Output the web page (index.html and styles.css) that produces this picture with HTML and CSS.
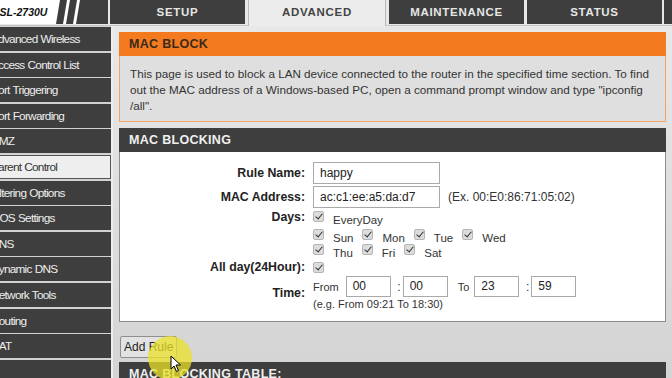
FILE: index.html
```html
<!DOCTYPE html>
<html lang="en">
<head>
    <meta charset="UTF-8">
    <meta name="viewport" content="width=device-width, initial-scale=1.0">
    <title>DSL-2730U - Parent Control</title>
    <link rel="stylesheet" href="styles.css">
</head>
<body>
<div class="page">
    <header class="topbar">
        <div class="logo">
            <span class="logo-text">DSL-2730U</span>
            <svg class="logo-slash" width="52" height="24" viewBox="0 0 52 24">
                <rect x="0" y="0" width="52" height="24" fill="#ffffff"/>
                <polygon points="4,0 11,0 7,24 0,24" fill="#3e3e3e"/>
                <polygon points="14,0 21,0 17,24 10,24" fill="#3e3e3e"/>
                <polygon points="24,0 52,0 52,24 20,24" fill="#3e3e3e"/>
            </svg>
        </div>
        <nav class="tabs">
            <a class="tab">SETUP</a>
            <a class="tab active">ADVANCED</a>
            <a class="tab">MAINTENANCE</a>
            <a class="tab">STATUS</a>
            <a class="tab stub"></a>
        </nav>
    </header>

    <div class="main">
        <aside class="sidebar">
            <ul>
                <li>Advanced Wireless</li>
                <li>Access Control List</li>
                <li>Port Triggering</li>
                <li>Port Forwarding</li>
                <li>DMZ</li>
                <li class="selected">Parent Control</li>
                <li>Filtering Options</li>
                <li>QOS Settings</li>
                <li>DNS</li>
                <li>Dynamic DNS</li>
                <li>Network Tools</li>
                <li>Routing</li>
                <li>NAT</li>
                <li></li>
            </ul>
        </aside>

        <section class="content">
            <div class="box info">
                <h2 class="box-head orange">MAC BLOCK</h2>
                <p class="info-text">This page is used to block a LAN device connected to the router in the specified time section. To find out the MAC address of a Windows-based PC, open a command prompt window and type "ipconfig /all".</p>
            </div>

            <div class="box">
                <h2 class="box-head dark">MAC BLOCKING</h2>
                <div class="form">
                    <div class="label">Rule Name:</div>
                    <div class="field"><span class="input wide">happy</span></div>

                    <div class="label">MAC Address:</div>
                    <div class="field"><span class="input wide">ac:c1:ee:a5:da:d7</span><span class="hint">(Ex. 00:E0:86:71:05:02)</span></div>

                    <div class="label label-top">Days:</div>
                    <div class="field days">
                        <div class="day-line first">
                            <span class="cb"></span><span class="day">EveryDay</span>
                        </div>
                        <div class="day-line">
                            <span class="cb"></span><span class="day">Sun</span>
                            <span class="cb"></span><span class="day">Mon</span>
                            <span class="cb"></span><span class="day">Tue</span>
                            <span class="cb"></span><span class="day">Wed</span>
                        </div>
                        <div class="day-line">
                            <span class="cb"></span><span class="day">Thu</span>
                            <span class="cb"></span><span class="day">Fri</span>
                            <span class="cb"></span><span class="day">Sat</span>
                        </div>
                    </div>

                    <div class="label">All day(24Hour):</div>
                    <div class="field"><span class="cb"></span></div>

                    <div class="label">Time:</div>
                    <div class="field time">
                        <div class="time-line">
                            <span class="small">From</span>
                            <span class="input short">00</span>
                            <span class="colon">:</span>
                            <span class="input short">00</span>
                            <span class="small to">To</span>
                            <span class="input short">23</span>
                            <span class="colon">:</span>
                            <span class="input short">59</span>
                        </div>
                        <div class="small example">(e.g. From 09:21 To 18:30)</div>
                    </div>
                </div>
            </div>

            <div class="actions">
                <button class="btn">Add Rule</button>
            </div>

            <div class="box">
                <h2 class="box-head dark">MAC BLOCKING TABLE:</h2>
            </div>
        </section>
    </div>

    <!-- screen recorder cursor highlight -->
    <div class="cursor-glow"></div>
    <svg class="cursor" width="12" height="18" viewBox="0 0 12 18">
        <path d="M1 1 L1 14 L4 11 L6.5 16.5 L8.5 15.5 L6 10 L10.5 10 Z" fill="#ffffff" stroke="#000000" stroke-width="1"/>
    </svg>
</div>
</body>
</html>
```

FILE: styles.css
```css
body, html {
    margin: 0;
    padding: 0;
    height: 100%;
    overflow: hidden;
    font-family: "Liberation Sans", Arial, sans-serif;
    background-color: #d9d9d9;
}

.page {
    position: relative;
    margin-left: -10px;
    width: 682px;
    height: 378px;
}

/* top bar */

.topbar {
    display: flex;
    height: 25px;
    background-color: #e8e8e8;
    border-bottom: 1px solid #c4c4c4;
}

.logo {
    display: flex;
    width: 118px;
    height: 24px;
    background-color: #3e3e3e;
    margin-right: 2px;
}

.logo-text {
    flex: none;
    width: 64px;
    padding-left: 2px;
    background-color: #ffffff;
    font-size: 10.5px;
    font-weight: bold;
    font-style: italic;
    line-height: 24px;
    color: #111;
    white-space: nowrap;
    overflow: hidden;
}

.logo-slash {
    flex: none;
}

.tabs {
    display: flex;
    gap: 3px;
}

.tab {
    width: 135px;
    height: 24px;
    line-height: 25px;
    text-align: center;
    background-color: #3e3e3e;
    color: #e6e6e6;
    font-size: 11.5px;
    font-weight: bold;
    letter-spacing: 0.7px;
}

.tab.active {
    width: 136px;
    height: 26px;
    background-color: #ececec;
    color: #444;
    border-left: 1px solid #b8b8b8;
    border-right: 1px solid #b8b8b8;
}

.tab.stub {
    width: 20px;
    margin-left: -1px;
}

/* main area */

.main {
    display: flex;
    height: 352px;
    background: linear-gradient(#e8e8e8, #d4d4d4);
}

.sidebar {
    width: 121px;
    padding-top: 1px;
    background-color: #d2d2d2;
    border-right: 2px solid #ededed;
}

.sidebar ul {
    list-style: none;
    margin: 0;
    padding: 0;
    display: flex;
    flex-direction: column;
    gap: 1.6px;
}

.sidebar li {
    height: 24px;
    line-height: 24px;
    padding-left: 1px;
    background-color: #3e3e3e;
    color: #eeeeee;
    font-size: 11.8px;
    letter-spacing: -0.75px;
    word-spacing: 0.5px;
    white-space: nowrap;
}

.sidebar li.selected {
    background-color: #eeeeee;
    color: #333;
    height: 22px;
    line-height: 22px;
    border: 1px solid #555;
    border-left: none;
}

.content {
    width: 547px;
    padding-left: 6px;
    padding-top: 6px;
}

.box {
    margin-bottom: 6px;
}

.box-head {
    margin: 0;
    height: 24px;
    line-height: 25px;
    padding-left: 10px;
    font-size: 12.5px;
    font-weight: bold;
    letter-spacing: 0.3px;
}

.box-head.orange {
    background-color: #f47a20;
    color: #3a2a1a;
}

.box-head.dark {
    background-color: #3e3e3e;
    color: #f0f0f0;
}

.info {
    border: 1px solid #f3a567;
    border-top: none;
}

.info .box-head {
    margin: 0 -1px;
}

.info-text {
    margin: 0;
    padding: 10px 10px 7px 10px;
    background-color: #dfdfdf;
    color: #333;
    font-size: 11.7px;
    line-height: 16px;
}

/* form */

.form {
    display: grid;
    grid-template-columns: 185px 1fr;
    column-gap: 8px;
    row-gap: 2px;
    padding: 10px 0 11px 0;
    background-color: #ffffff;
    border: 1px solid #8c8c8c;
    border-top: none;
}

.label {
    display: flex;
    align-items: center;
    justify-content: flex-end;
    font-size: 12.3px;
    line-height: 15px;
    font-weight: bold;
    color: #222;
}

.label-top {
    align-items: flex-start;
}

.field {
    display: flex;
    align-items: center;
    font-size: 12px;
    color: #333;
}

.input {
    display: inline-block;
    box-sizing: border-box;
    height: 22px;
    line-height: 20px;
    border: 1px solid #a9a9a9;
    padding-left: 6px;
    font-size: 12px;
    color: #222;
    background-color: #ffffff;
}

.input.wide {
    width: 127px;
}

.input.short {
    width: 45px;
    height: 21px;
    line-height: 19px;
}

.hint {
    margin-left: 8px;
}

.cb {
    display: inline-block;
    flex: none;
    box-sizing: border-box;
    width: 11px;
    height: 11px;
    margin-right: 8px;
    border: 1px solid #b5b5b5;
    border-radius: 2px;
    background-color: #dcdcdc;
    position: relative;
}

.cb::after {
    content: "";
    position: absolute;
    left: 3px;
    top: 0px;
    width: 3px;
    height: 6px;
    border: solid #333;
    border-width: 0 1.5px 1.5px 0;
    transform: rotate(40deg);
}

.days {
    flex-direction: column;
    align-items: flex-start;
}

.day-line {
    display: flex;
    align-items: flex-start;
    height: 15px;
}

.day-line.first {
    height: 18px;
}

.day-line .cb {
    margin-top: 1px;
}

.day {
    font-size: 11.5px;
    line-height: 14px;
    padding-top: 3px;
    margin-right: 9px;
    margin-left: 1px;
}

.time {
    flex-direction: column;
    align-items: flex-start;
    margin-top: -1px;
}

.time-line {
    display: flex;
    align-items: center;
}

.small {
    font-size: 11px;
    color: #333;
}

.example {
    margin-top: 1px;
}

.time-line .small {
    margin-right: 7px;
}

.time-line .to {
    margin-left: 10px;
    margin-right: 5px;
}

.colon {
    width: 10px;
    text-align: right;
    padding-right: 2px;
}

.actions {
    padding-top: 8px;
    height: 26px;
}

.btn {
    height: 22px;
    padding: 0 3px;
    font-family: "Liberation Sans", Arial, sans-serif;
    font-size: 12px;
    color: #222;
    background-color: #e2e2e2;
    border: 1px solid #8f8f8f;
    border-radius: 2px;
    margin-left: 1px;
    vertical-align: top;
}

/* recorder overlay */

.cursor-glow {
    position: absolute;
    left: 158px;
    top: 336px;
    width: 44px;
    height: 44px;
    border-radius: 50%;
    background-color: rgba(235, 225, 40, 0.75);
}

.cursor {
    position: absolute;
    left: 180px;
    top: 355px;
}
```
